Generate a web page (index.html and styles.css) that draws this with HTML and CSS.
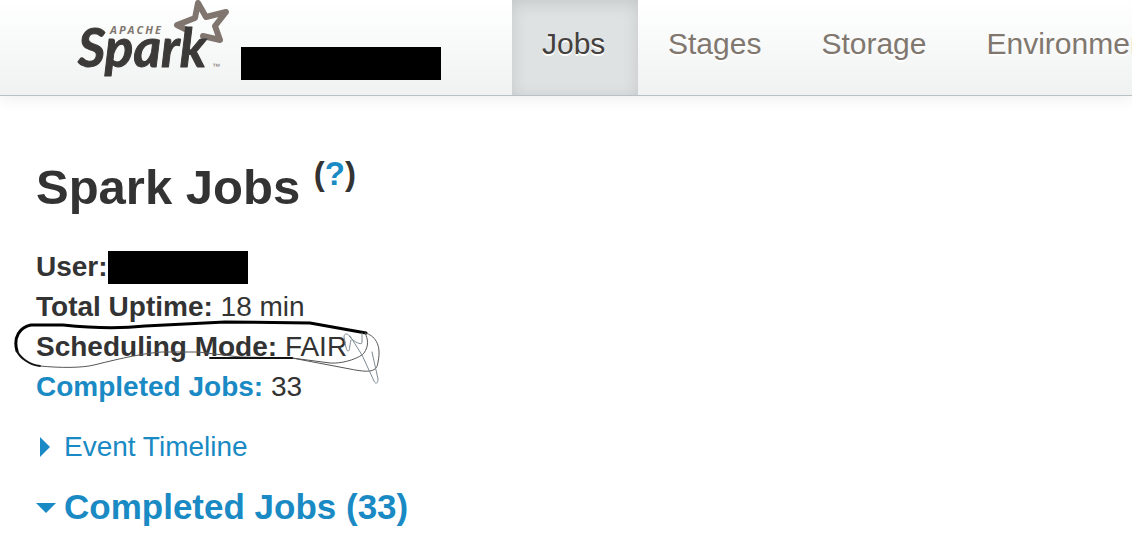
FILE: index.html
```html
<!DOCTYPE html>
<html lang="en">
<head>
<meta charset="utf-8">
<title>Spark Jobs</title>
<link rel="stylesheet" href="styles.css">
</head>
<body>
<header class="navbar">
  <a class="brand" href="#" aria-label="Apache Spark">
    <svg class="logo" width="160" height="80" viewBox="0 0 160 80">
      <path class="logo-star" d="M117 31Q109 27 105 25L123 18L126 3L134 17L154 12L143 26L148 40L131 36"/>
      <text class="logo-apache" x="38" y="34">APACHE</text>
      <text class="logo-name" x="6" y="67">Spark</text>
      <text class="logo-tm" x="140" y="69">™</text>
    </svg>
  </a>
  <span class="redacted redacted-version"></span>
  <nav class="tabs">
    <a class="tab tab-active" href="#">Jobs</a>
    <a class="tab" href="#">Stages</a>
    <a class="tab" href="#">Storage</a>
    <a class="tab" href="#">Environment</a>
  </nav>
</header>
<main class="content">
  <h1 class="title">Spark Jobs <sup class="help">(<a href="#">?</a>)</sup></h1>
  <ul class="summary">
    <li class="user"><strong>User:</strong><span class="redacted redacted-user"></span></li>
    <li><strong>Total Uptime:</strong> 18 min</li>
    <li class="marked"><strong>Scheduling Mode:</strong> FAIR
      <svg class="scribble" width="380" height="76" viewBox="0 0 380 76" aria-hidden="true">
        <path class="ink-heavy" d="M17 36C13 22 20 12 31 10L63 10Q110 15 145 11L225 7L310 8L366 18"/>
        <path class="ink-medium" d="M17 36C20 43 30 50 40 51"/>
        <path class="ink-light" d="M40 51C60 53 82 53 94 50C122 43 145 38 162 37L198 37L240 42L292 43L330 48C345 49 361 42 364 38C369 31 368 24 365 18C374 20 382 29 378 47C377 57 370 58 350 54L292 43"/>
        <path class="ink-medium" d="M210 43L292 43"/>
        <path class="ink-grey" d="M351 25C349 33 350 36 348 36C346 36 345 27 344 22C344 18 348 18 350 22C354 27 361 30 362 28V18M350 21L362 40L374 66C376 70 378 68 378 64L372 37"/>
      </svg>
    </li>
    <li><a class="strong-link" href="#">Completed Jobs:</a> 33</li>
  </ul>
  <a class="toggle" href="#">
    <svg class="arrow" width="20" height="20" viewBox="0 0 20 20"><path d="M4 0L14 10L4 20Z"/></svg>
    <span>Event Timeline</span>
  </a>
  <h2 class="section"><a class="toggle" href="#">
    <svg class="arrow" width="20" height="20" viewBox="0 0 20 20"><path d="M0 6H20L10 16Z"/></svg>
    <span>Completed Jobs (33)</span>
  </a></h2>
</main>
</body>
</html>
```
FILE: styles.css
```css
* { box-sizing: border-box; }
body {
  margin: 0;
  overflow-x: hidden;
  background: #fff;
  color: #333;
  font: 28px/40px "Liberation Sans", Arial, sans-serif;
}
a { color: #1a8ac4; text-decoration: none; }
.navbar {
  display: flex;
  overflow-x: clip;
  border-bottom: 1px solid #b8c1c5;
  background: linear-gradient(#fff, #f0f2f2);
  box-shadow: 0 2px 16px rgba(0, 0, 0, 0.08);
}
.brand { flex: none; margin-left: 72px; height: 80px; }
.logo { display: block; overflow: visible; }
.logo-star { fill: none; stroke: #80766f; stroke-width: 6; stroke-linejoin: round; stroke-linecap: round; }
.logo-apache { font: italic bold 11px "Open Sans", sans-serif; letter-spacing: 2px; fill: #80766f; }
.logo-name {
  font: italic bold 53px Lato, sans-serif;
  fill: #3c3a39;
  stroke: #3c3a39;
  stroke-width: 1;
  stroke-linejoin: round;
}
.logo-tm { font: 8px "Liberation Sans", sans-serif; fill: #80766f; }
.redacted { flex: none; height: 33px; background: #000; }
.redacted-version { width: 200px; margin: 47px 71px 0 9px; }
.redacted-user { width: 140px; }
.tabs { display: flex; flex: none; }
.tab {
  min-width: 126px;
  padding: 24px 30px 31px;
  color: #80776f;
  font-size: 30px;
  text-shadow: 0 2px 0 #fff;
}
.tab-active {
  background: #dee2e3;
  box-shadow: inset 0 3px 16px rgba(0, 0, 0, 0.12);
  color: #44403d;
}
.content { padding: 51px 36px 16px; }
.title { margin: 0 0 20px; font-size: 49px; line-height: 80px; }
.help { font-size: 33px; line-height: 1; vertical-align: 19px; }
.summary { margin: 0 0 20px; padding: 0; list-style: none; }
.user { display: flex; align-items: center; }
.marked { position: relative; }
.scribble { position: absolute; top: -12px; left: -36px; overflow: visible; pointer-events: none; }
.scribble path { fill: none; stroke: #111; stroke-linecap: round; stroke-linejoin: round; }
.scribble .ink-heavy { stroke-width: 3; stroke: #000; }
.scribble .ink-medium { stroke-width: 2; }
.scribble .ink-light { stroke-width: 1; stroke: #555; }
.scribble .ink-grey { stroke-width: 1; stroke: #7d8b91; }
.strong-link { font-weight: bold; }
.toggle { display: flex; align-items: center; gap: 8px; }
.arrow { flex: none; fill: #1a8ac4; }
.section { margin: 20px 0 0; font-size: 35px; line-height: 40px; }
```
